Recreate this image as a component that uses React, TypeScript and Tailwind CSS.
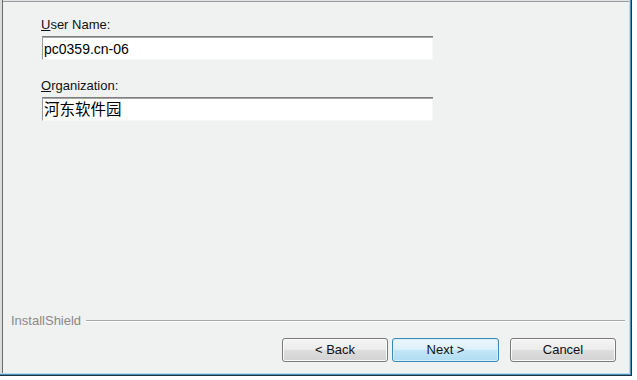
import React from "react";

const font = { fontFamily: '"Liberation Sans", Arial, sans-serif' };

function Btn({ children, primary }: { children: React.ReactNode; primary?: boolean }) {
  return (
    <div
      className={
        "h-[24px] rounded-[3px] border flex items-center justify-center text-[13px] text-[#111] " +
        (primary
          ? "w-[107px] border-[#3a8bb8] bg-[linear-gradient(#ecf7fd_0%,#dcf0fb_50%,#c3e6f8_50%,#b0dcf3_100%)] shadow-[inset_0_0_0_1px_#d7eefb]"
          : "w-[106px] border-[#7a7a7a] bg-[linear-gradient(#f4f4f4_0%,#ececec_50%,#dedede_50%,#d2d2d2_100%)] shadow-[inset_0_0_0_1px_#fbfbfb]")
      }
    >
      {children}
    </div>
  );
}

function Field({ children, cjk }: { children: React.ReactNode; cjk?: boolean }) {
  return (
    <div className="ml-[1px] w-[391px] h-[24px] flex flex-col">
      <div className="h-[1px] bg-[#7e7e7e]" />
      <div className="h-[1px] bg-[#a6a6a6]" />
      <div className="flex-1 flex bg-white border-l border-[#9a9a9a] border-r border-b border-r-[#f7f7f7] border-b-[#f7f7f7]">
        <div
          className={"pl-[1px] flex items-center text-black " + (cjk ? "text-[15.5px] leading-[20px]" : "text-[14px] leading-[20px]")}
          style={cjk ? { fontFamily: '"Liberation Sans", "Noto Sans CJK SC", sans-serif' } : undefined}
        >
          {children}
        </div>
      </div>
    </div>
  );
}

export default function App() {
  return (
    <div className="w-[637px] h-[380px] bg-white" style={font}>
      <div className="w-[632px] h-[376px] flex border-r border-b border-[#1e3446]">
        <div className="flex-1 flex border-r border-b border-[#4f8fb6]">
          <div className="flex-1 flex border-r border-b border-[#b4dcef]">
            <div className="flex-1 flex border-l-2 border-[#dcdcdc]">
              <div className="flex-1 flex flex-col border-l border-[#6b6b6b]">
                <div className="h-[1px] bg-[#dfe4e8]" />
                <div className="h-[1px] bg-[#9c9c9c]" />
                <div className="flex-1 flex flex-col bg-[#f0f1f1]">
                  <div className="pl-[38px] pt-[15px] flex flex-col">
                    <div className="text-[13px] leading-[15px] text-[#111]">
                      <span className="underline">U</span>ser Name:
                    </div>
                    <div className="mt-[4px]">
                      <Field>pc0359.cn-06</Field>
                    </div>
                    <div className="mt-[18px] text-[13px] leading-[15px] text-[#111]">
                      <span className="underline">O</span>rganization:
                    </div>
                    <div className="mt-[4px]">
                      <Field cjk>河东软件园</Field>
                    </div>
                  </div>
                  <div className="flex-1" />
                  <div className="pl-[8px] pr-[4px] flex items-center h-[15px]">
                    <div className="text-[13px] leading-[15px] text-[#8a8a8a]">InstallShield</div>
                    <div className="ml-[5px] flex-1 border-t border-[#a8a8a8] border-b border-b-white" />
                  </div>
                  <div className="mt-[10px] pb-[11px] pr-[13px] flex justify-end">
                    <Btn>&lt; Back</Btn>
                    <div className="w-[4px]" />
                    <Btn primary>Next &gt;</Btn>
                    <div className="w-[11px]" />
                    <Btn>Cancel</Btn>
                  </div>
                </div>
              </div>
            </div>
          </div>
        </div>
      </div>
    </div>
  );
}
